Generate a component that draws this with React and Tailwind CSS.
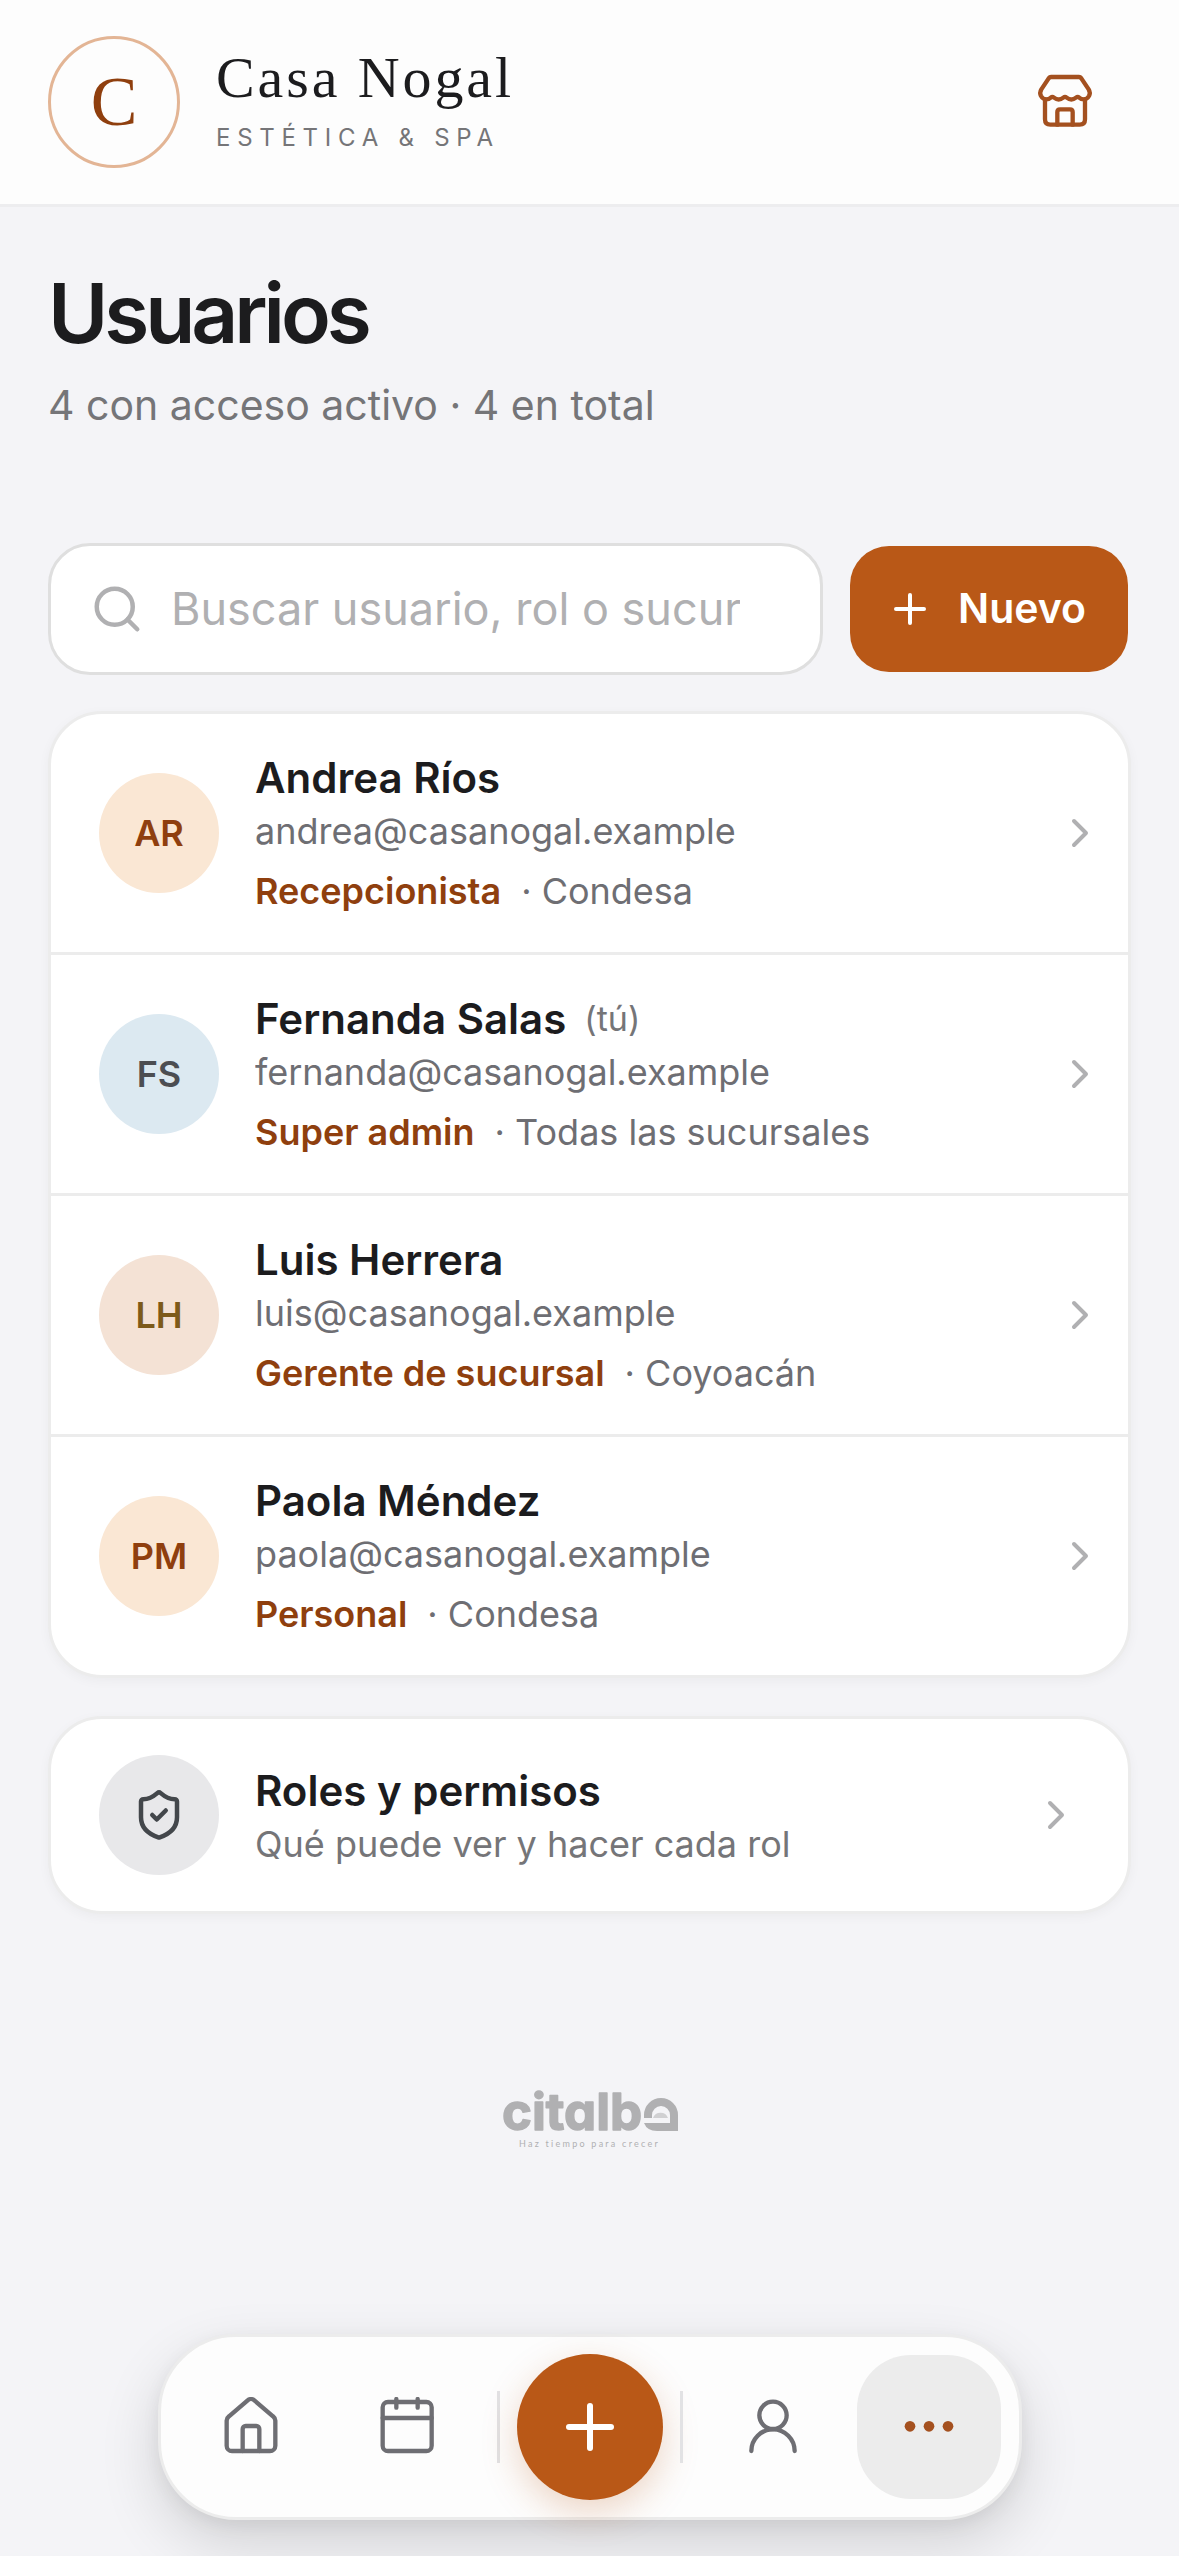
import { useState } from 'react'
import { ChevronRight, Plus, Search, ShieldCheck } from 'lucide-react'

const users = [
  { initials: 'AR', name: 'Andrea Ríos', email: 'andrea@casanogal.example', role: 'Recepcionista', branch: 'Condesa', avatar: 'bg-[#fae7d4] text-[#8f3f0e]' },
  { initials: 'FS', name: 'Fernanda Salas', email: 'fernanda@casanogal.example', role: 'Super admin', branch: 'Todas las sucursales', me: true, avatar: 'bg-[#dce9f1] text-[#4c4e52]' },
  { initials: 'LH', name: 'Luis Herrera', email: 'luis@casanogal.example', role: 'Gerente de sucursal', branch: 'Coyoacán', avatar: 'bg-[#f4e2d5] text-[#7d5a1a]' },
  { initials: 'PM', name: 'Paola Méndez', email: 'paola@casanogal.example', role: 'Personal', branch: 'Condesa', avatar: 'bg-[#fae7d4] text-[#8f3f0e]' },
]

const Icon = ({ viewBox, children }) => (
  <svg viewBox={viewBox} className="size-[60px]" fill="none" stroke="currentColor" strokeWidth="13" strokeLinecap="round" strokeLinejoin="round" aria-hidden="true">
    {children}
  </svg>
)

const StoreIcon = () => (
  <Icon viewBox="165 96 180 180">
    <path d="M213 111H297q4 0 7 4L326 148q6 10 1 20q-6 10-15 10q-9 0-14-5q-5-4-10 0q-14 11-28 0q-5-4-10 0q-14 11-28 0q-5-4-10 0q-5 5-14 5q-9 0-15-10q-5-10 1-20L206 115q3-4 7-4z" />
    <path d="M195 178V238q0 16 16 16H299q16 0 16-16V178" />
    <path d="M232 254V216q0-8 8-8H270q8 0 8 8V254" />
  </Icon>
)

const HomeIcon = () => (
  <Icon viewBox="244 261 180 180">
    <path d="M261 332V407a16 16 0 0 0 16 16H391a16 16 0 0 0 16-16V332a18 18 0 0 0-7-13L344 271a15 15 0 0 0-20 0L268 319a18 18 0 0 0-7 13z" />
    <path d="M309 423V357a9 9 0 0 1 9-9H350a9 9 0 0 1 9 9V423" />
  </Icon>
)

const CalendarIcon = () => (
  <Icon viewBox="712 261 180 180">
    <rect x="729" y="276" width="147" height="147" rx="16" />
    <path d="M729 324H876M770 267V293M834 267V293" />
  </Icon>
)

const UserIcon = () => (
  <Icon viewBox="490 261 180 180">
    <circle cx="580" cy="316" r="41" />
    <path d="M515 423a65 65 0 0 1 130 0" />
  </Icon>
)

const DotsIcon = () => (
  <svg viewBox="958 261 180 180" className="size-[60px]" fill="currentColor" aria-hidden="true">
    <circle cx="991" cy="349" r="16" />
    <circle cx="1048" cy="349" r="16" />
    <circle cx="1105" cy="349" r="16" />
  </svg>
)

const Header = () => (
  <header className="flex items-center justify-between border-b-3 border-[#ededef] bg-[#fdfdfd] px-12 py-9">
    <div className="flex items-center gap-9">
      <div className="flex size-[132px] items-center justify-center rounded-full border-3 border-[#e3b595] font-['Liberation_Serif',serif] text-[70px] leading-none text-[#8f3f0e]">C</div>
      <div>
        <p className="font-['Liberation_Serif',serif] text-[58px] leading-[60px] tracking-wider text-[#1c1c1e]">Casa Nogal</p>
        <p className="mt-3 text-2xl leading-9 tracking-[0.28em] text-[#757578]">ESTÉTICA &amp; SPA</p>
      </div>
    </div>
    <button type="button" aria-label="Sucursal" className="flex size-[132px] items-center justify-center text-[#a4501f]">
      <StoreIcon />
    </button>
  </header>
)

const UserRow = ({ user }) => (
  <li>
    <button type="button" className="flex w-full items-center gap-9 py-[35px] pr-6 pl-12 text-left">
      <span className={`flex size-[120px] shrink-0 items-center justify-center rounded-full text-4xl font-semibold ${user.avatar}`}>{user.initials}</span>
      <span className="block min-w-0 flex-1">
        <span className="flex items-center gap-[18px] text-[42px] leading-[58px] font-semibold text-[#1c1c1e]">
          {user.name}
          {user.me && <span className="text-[34px] font-normal text-[#757578]">(tú)</span>}
        </span>
        <span className="block truncate text-4xl leading-[48px] text-[#6e6e73]">{user.email}</span>
        <span className="mt-[10px] block text-4xl leading-[52px] text-[#6e6e73]">
          <span className="mr-5 font-semibold text-[#8f3f0e]">{user.role}</span>· {user.branch}
        </span>
      </span>
      <ChevronRight className="size-12 shrink-0 text-[#b0b0b2]" />
    </button>
  </li>
)

// brand mark of the platform, the last letter is the arch with the rising sun
const Citalba = () => (
  <footer className="mt-[174px] flex flex-col items-center text-[#b0b0b2]">
    <svg viewBox="0 0 176 44" className="h-11 w-[176px] overflow-visible" role="img" aria-label="citalba">
      <text x="0" y="42" className="font-['Inter',sans-serif] text-[51px] font-bold [font-feature-settings:'cv11']" fill="currentColor" stroke="currentColor" strokeWidth="1.5" strokeLinejoin="round">citalb</text>
      <path d="M146 30V27a13 13 0 0 1 26 0V43" fill="none" stroke="currentColor" strokeWidth="8" />
      <path d="M151 30a8 8 0 0 1 15 0z" fill="#d0d0d2" />
      <path d="M142 35H169V43H155q-10 0-13-8z" fill="currentColor" />
    </svg>
    <p className="mt-1.5 font-['Lato',sans-serif] text-[9px] leading-3 tracking-[0.25em]">Haz tiempo para crecer</p>
  </footer>
)

const NavButton = ({ label, active, children }) => (
  <button type="button" aria-label={label} className={`flex size-36 items-center justify-center rounded-[54px] ${active ? 'bg-[#ececec] text-[#a4501f]' : 'text-[#6e6e73]'}`}>
    {children}
  </button>
)

const Separator = () => <span className="mx-1.5 h-[72px] w-[3px] bg-[#e2e2e4]" />

const BottomNav = () => (
  <nav className="sticky bottom-9 mt-auto mb-9 flex items-center gap-3 self-center rounded-[78px] border-3 border-[#ececec] bg-[#fdfdfd] p-[18px] shadow-[0_24px_60px_rgba(0,0,0,0.14),0_6px_18px_rgba(0,0,0,0.06)]">
    <NavButton label="Inicio"><HomeIcon /></NavButton>
    <NavButton label="Agenda"><CalendarIcon /></NavButton>
    <Separator />
    <button type="button" aria-label="Nueva cita" className="flex size-36 items-center justify-center rounded-full bg-[#b95817] text-white shadow-[0_12px_36px_rgba(185,88,23,0.25)] ring-1 ring-[#b95817]">
      <Plus className="size-[72px]" strokeWidth={2} />
    </button>
    <Separator />
    <NavButton label="Clientes"><UserIcon /></NavButton>
    <NavButton label="Más" active><DotsIcon /></NavButton>
  </nav>
)

const App = () => {
  const [query, setQuery] = useState('')
  const filtered = users.filter((u) => `${u.name} ${u.role} ${u.branch}`.toLowerCase().includes(query.toLowerCase()))

  return (
    <div className="flex min-h-screen flex-col bg-[#f4f4f7] font-['Inter',sans-serif]">
      <Header />

      <main className="px-12 pt-[62px]">
        <h1 className="text-[82px] leading-[90px] font-semibold tracking-tighter text-[#1c1c1e]">Usuarios</h1>
        <p className="mt-4 text-[41px] leading-[60px] text-[#757578]">4 con acceso activo · 4 en total</p>

        <div className="mt-[108px] flex gap-6">
          <label className="flex h-[132px] min-w-0 flex-1 items-center gap-[27px] rounded-[42px] border-3 border-[#dfdfdf] bg-white pr-20 pl-[39px]">
            <Search className="size-[54px] shrink-0 text-[#b0b0b2]" />
            <input
              type="text"
              aria-label="Buscar"
              placeholder="Buscar usuario, rol o sucursal"
              value={query}
              onChange={(e) => setQuery(e.target.value)}
              className="w-full min-w-0 text-[45px] leading-[60px] text-[#1c1c1e] outline-none placeholder:text-[#b0b0b2]"
            />
          </label>
          <button type="button" className="flex shrink-0 items-center gap-6 rounded-[42px] border-3 border-transparent bg-[#b95817] bg-clip-padding pr-[42px] pl-9 text-[41px] font-semibold text-white">
            <Plus className="size-12" />
            Nuevo
          </button>
        </div>

        <ul className="mt-9 divide-y-3 divide-[#ececec] overflow-hidden rounded-[54px] border-3 border-[#ececec] bg-white shadow-[0_3px_12px_rgba(0,0,0,0.04)]">
          {filtered.map((user) => (
            <UserRow key={user.email} user={user} />
          ))}
        </ul>

        <button type="button" className="mt-[38px] flex w-full items-center gap-9 rounded-[54px] border-3 border-[#ececec] bg-white px-12 py-9 text-left shadow-[0_3px_12px_rgba(0,0,0,0.04)]">
          <span className="flex size-[120px] shrink-0 items-center justify-center rounded-full bg-[#e8e8ea] text-[#43474b]">
            <ShieldCheck className="size-[54px]" />
          </span>
          <span className="block flex-1">
            <span className="block text-[42px] leading-[58px] font-semibold text-[#1c1c1e]">Roles y permisos</span>
            <span className="block text-4xl leading-[48px] text-[#757578]">Qué puede ver y hacer cada rol</span>
          </span>
          <ChevronRight className="size-12 shrink-0 text-[#b0b0b2]" />
        </button>
      </main>

      <Citalba />
      <BottomNav />
    </div>
  )
}

export default App
